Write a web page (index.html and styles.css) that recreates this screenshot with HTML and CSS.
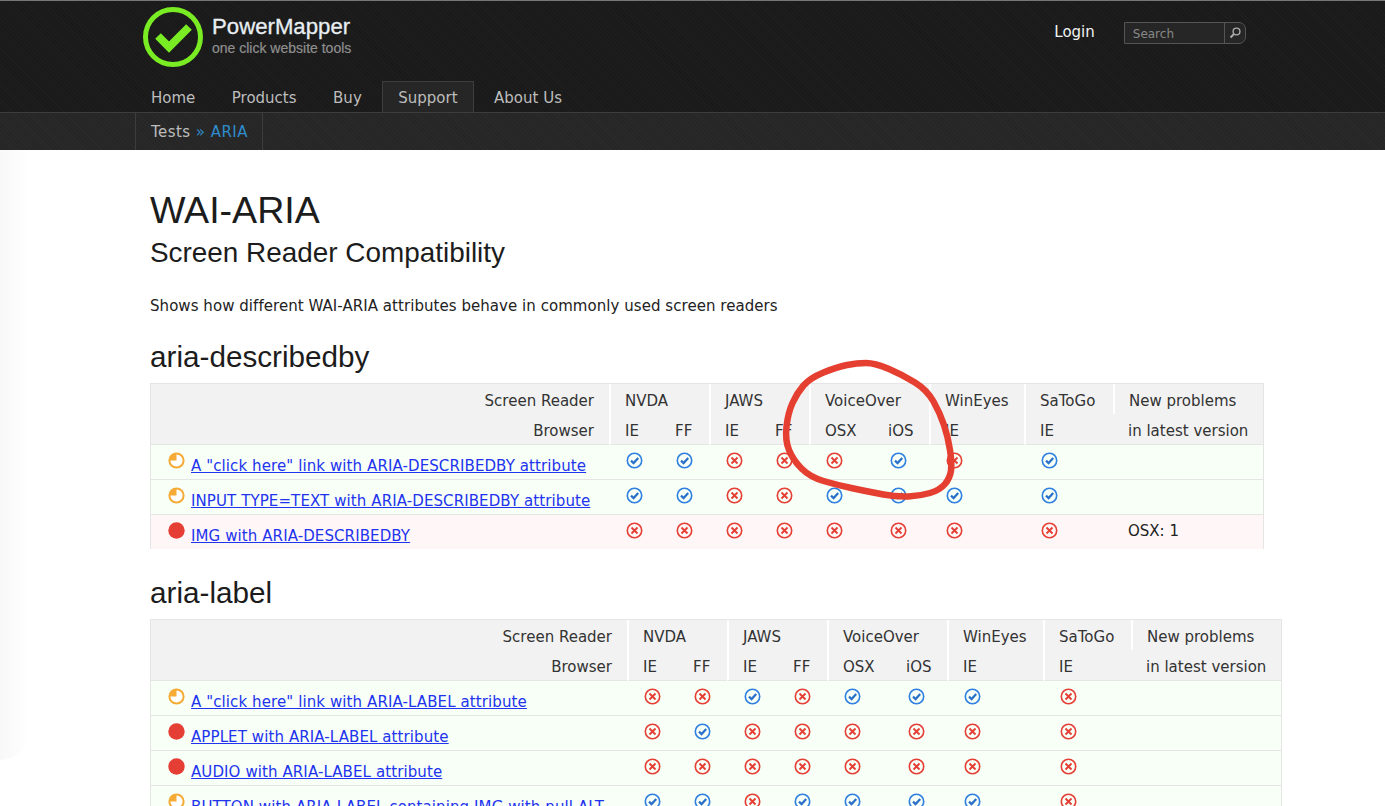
FILE: index.html
```html
<!DOCTYPE html>
<html lang="en">
  <head>
    <meta charset="UTF-8" />
    <title>WAI-ARIA Screen Reader Compatibility</title>
    <link rel="stylesheet" href="styles.css">
  </head>
  <body>
    <svg class="defs" width="0" height="0">
      <symbol id="ok" viewBox="0 0 17 17">
        <circle cx="8.5" cy="8.5" r="7.2" fill="none" stroke="#2f7fe0" stroke-width="1.6"/>
        <path d="M5 8.6l2.6 2.5 4.6-5" fill="none" stroke="#2a6fc9" stroke-width="2.2"/>
      </symbol>
      <symbol id="no" viewBox="0 0 17 17">
        <circle cx="8.5" cy="8.5" r="7.2" fill="none" stroke="#e53e35" stroke-width="1.6"/>
        <path d="M5.5 5.5l6 6M11.5 5.5l-6 6" fill="none" stroke="#e53e35" stroke-width="1.9"/>
      </symbol>
      <symbol id="part" viewBox="0 0 17 17">
        <circle cx="8.5" cy="8.5" r="7.1" fill="#fff" stroke="#f5ab35" stroke-width="2"/>
        <path d="M8.5 8.5V1.5A7 7 0 0 0 1.5 8.5z" fill="#f5ab35"/>
      </symbol>
      <symbol id="fail" viewBox="0 0 17 17">
        <circle cx="8.5" cy="8.5" r="8.2" fill="#e53e35"/>
      </symbol>
    </svg>

    <div class="page">
      <header class="site-header">
        <div class="top-bar">
          <a class="logo" href="#">
            <svg class="logo-mark" width="62" height="62" viewBox="0 0 62 62">
              <circle cx="31" cy="31" r="27.5" fill="none" stroke="#79ec23" stroke-width="5"/>
              <path d="M16 30l11 11 20-20" fill="none" stroke="#79ec23" stroke-width="8"/>
            </svg>
            <span class="logo-text">
              <span class="logo-name">PowerMapper</span>
              <span class="logo-tag">one click website tools</span>
            </span>
          </a>
          <a class="login" href="#">Login</a>
          <form class="search">
            <span class="search-input">Search</span>
            <span class="search-btn">
              <svg width="14" height="14" viewBox="0 0 14 14">
                <circle cx="8.5" cy="5.5" r="3.4" fill="none" stroke="#aaa" stroke-width="1.4"/>
                <path d="M6 8l-3.5 3.5" stroke="#aaa" stroke-width="2"/>
              </svg>
            </span>
          </form>
        </div>
        <nav class="main-nav">
          <a href="#">Home</a>
          <a href="#">Products</a>
          <a href="#">Buy</a>
          <a class="active" href="#">Support</a>
          <a href="#">About Us</a>
        </nav>
        <div class="sub-bar">
          <div class="crumbs">Tests <span class="here">» ARIA</span></div>
        </div>
      </header>

      <div class="left-fade"></div>

      <main class="content">
        <h1>WAI-ARIA</h1>
        <h2 class="subtitle">Screen Reader Compatibility</h2>
        <p class="intro">Shows how different WAI-ARIA attributes behave in commonly used screen readers</p>

        <h2 class="section">aria-describedby</h2>
        <table class="results first">
          <colgroup>
            <col class="c-label-a"><col class="c50"><col class="c50"><col class="c50"><col class="c50"><col class="c64"><col class="c56"><col class="c-win-a"><col class="c-sat-a"><col class="c-new">
          </colgroup>
          <thead>
            <tr>
              <th class="rh">Screen Reader</th>
              <th class="grp" colspan="2">NVDA</th>
              <th class="grp" colspan="2">JAWS</th>
              <th class="grp" colspan="2">VoiceOver</th>
              <th class="grp">WinEyes</th>
              <th class="grp">SaToGo</th>
              <th class="grp">New problems</th>
            </tr>
            <tr>
              <th class="rh">Browser</th>
              <th class="grp">IE</th><th>FF</th>
              <th class="grp">IE</th><th>FF</th>
              <th class="grp">OSX</th><th class="ios">iOS</th>
              <th class="grp">IE</th>
              <th class="grp">IE</th>
              <th class="latest">in latest version</th>
            </tr>
          </thead>
          <tbody>
            <tr class="good">
              <td class="name"><div class="name-in"><svg class="ic"><use href="#part"/></svg><a href="#">A "click here" link with ARIA-DESCRIBEDBY attribute</a></div></td>
              <td><svg class="ic"><use href="#ok"/></svg></td><td><svg class="ic"><use href="#ok"/></svg></td>
              <td><svg class="ic"><use href="#no"/></svg></td><td><svg class="ic"><use href="#no"/></svg></td>
              <td><svg class="ic"><use href="#no"/></svg></td><td><svg class="ic"><use href="#ok"/></svg></td>
              <td><svg class="ic"><use href="#no"/></svg></td>
              <td><svg class="ic"><use href="#ok"/></svg></td>
              <td></td>
            </tr>
            <tr class="good">
              <td class="name"><div class="name-in"><svg class="ic"><use href="#part"/></svg><a href="#">INPUT TYPE=TEXT with ARIA-DESCRIBEDBY attribute</a></div></td>
              <td><svg class="ic"><use href="#ok"/></svg></td><td><svg class="ic"><use href="#ok"/></svg></td>
              <td><svg class="ic"><use href="#no"/></svg></td><td><svg class="ic"><use href="#no"/></svg></td>
              <td><svg class="ic"><use href="#ok"/></svg></td><td><svg class="ic"><use href="#ok"/></svg></td>
              <td><svg class="ic"><use href="#ok"/></svg></td>
              <td><svg class="ic"><use href="#ok"/></svg></td>
              <td></td>
            </tr>
            <tr class="bad last">
              <td class="name"><div class="name-in"><svg class="ic"><use href="#fail"/></svg><a href="#">IMG with ARIA-DESCRIBEDBY</a></div></td>
              <td><svg class="ic"><use href="#no"/></svg></td><td><svg class="ic"><use href="#no"/></svg></td>
              <td><svg class="ic"><use href="#no"/></svg></td><td><svg class="ic"><use href="#no"/></svg></td>
              <td><svg class="ic"><use href="#no"/></svg></td><td><svg class="ic"><use href="#no"/></svg></td>
              <td><svg class="ic"><use href="#no"/></svg></td>
              <td><svg class="ic"><use href="#no"/></svg></td>
              <td class="note">OSX: 1</td>
            </tr>
          </tbody>
        </table>

        <h2 class="section">aria-label</h2>
        <table class="results second">
          <colgroup>
            <col class="c-label-b"><col class="c50"><col class="c50"><col class="c50"><col class="c50"><col class="c64"><col class="c56"><col class="c-win-b"><col class="c-sat-b"><col class="c-new">
          </colgroup>
          <thead>
            <tr>
              <th class="rh">Screen Reader</th>
              <th class="grp" colspan="2">NVDA</th>
              <th class="grp" colspan="2">JAWS</th>
              <th class="grp" colspan="2">VoiceOver</th>
              <th class="grp">WinEyes</th>
              <th class="grp">SaToGo</th>
              <th class="grp">New problems</th>
            </tr>
            <tr>
              <th class="rh">Browser</th>
              <th class="grp">IE</th><th>FF</th>
              <th class="grp">IE</th><th>FF</th>
              <th class="grp">OSX</th><th class="ios">iOS</th>
              <th class="grp">IE</th>
              <th class="grp">IE</th>
              <th class="latest">in latest version</th>
            </tr>
          </thead>
          <tbody>
            <tr class="good">
              <td class="name"><div class="name-in"><svg class="ic"><use href="#part"/></svg><a href="#">A "click here" link with ARIA-LABEL attribute</a></div></td>
              <td><svg class="ic"><use href="#no"/></svg></td><td><svg class="ic"><use href="#no"/></svg></td>
              <td><svg class="ic"><use href="#ok"/></svg></td><td><svg class="ic"><use href="#no"/></svg></td>
              <td><svg class="ic"><use href="#ok"/></svg></td><td><svg class="ic"><use href="#ok"/></svg></td>
              <td><svg class="ic"><use href="#ok"/></svg></td>
              <td><svg class="ic"><use href="#no"/></svg></td>
              <td></td>
            </tr>
            <tr class="good">
              <td class="name"><div class="name-in"><svg class="ic"><use href="#fail"/></svg><a href="#">APPLET with ARIA-LABEL attribute</a></div></td>
              <td><svg class="ic"><use href="#no"/></svg></td><td><svg class="ic"><use href="#ok"/></svg></td>
              <td><svg class="ic"><use href="#no"/></svg></td><td><svg class="ic"><use href="#no"/></svg></td>
              <td><svg class="ic"><use href="#no"/></svg></td><td><svg class="ic"><use href="#no"/></svg></td>
              <td><svg class="ic"><use href="#no"/></svg></td>
              <td><svg class="ic"><use href="#no"/></svg></td>
              <td></td>
            </tr>
            <tr class="good">
              <td class="name"><div class="name-in"><svg class="ic"><use href="#fail"/></svg><a href="#">AUDIO with ARIA-LABEL attribute</a></div></td>
              <td><svg class="ic"><use href="#no"/></svg></td><td><svg class="ic"><use href="#no"/></svg></td>
              <td><svg class="ic"><use href="#no"/></svg></td><td><svg class="ic"><use href="#no"/></svg></td>
              <td><svg class="ic"><use href="#no"/></svg></td><td><svg class="ic"><use href="#no"/></svg></td>
              <td><svg class="ic"><use href="#no"/></svg></td>
              <td><svg class="ic"><use href="#no"/></svg></td>
              <td></td>
            </tr>
            <tr class="good">
              <td class="name"><div class="name-in"><svg class="ic"><use href="#part"/></svg><a href="#">BUTTON with ARIA-LABEL containing IMG with null ALT</a></div></td>
              <td><svg class="ic"><use href="#ok"/></svg></td><td><svg class="ic"><use href="#ok"/></svg></td>
              <td><svg class="ic"><use href="#no"/></svg></td><td><svg class="ic"><use href="#ok"/></svg></td>
              <td><svg class="ic"><use href="#ok"/></svg></td><td><svg class="ic"><use href="#ok"/></svg></td>
              <td><svg class="ic"><use href="#ok"/></svg></td>
              <td><svg class="ic"><use href="#no"/></svg></td>
              <td></td>
            </tr>
          </tbody>
        </table>
      </main>

      <!-- hand drawn marker ring over the first table -->
      <svg class="scribble" width="1385" height="806" viewBox="0 0 1385 806">
        <path d="M866 363Q875 363 889 369Q903 375 915 382.5Q927 390 933.5 401.5Q940 413 944 425Q948 437 950 450Q952 463 951 470.5Q950 478 945 484Q940 490 930 493Q920 496 908.5 496.5Q897 497 883.5 494.5Q870 492 853.5 488.5Q837 485 823.5 481Q810 477 801.5 468.5Q793 460 789 450Q785 440 786.5 426.5Q788 413 792.5 403Q797 393 803.5 385.5Q810 378 823.5 372.5Q837 367 847 365Q857 363 866 363" fill="none" stroke="#e53f31" stroke-width="6.5" stroke-linecap="round"/>
      </svg>
    </div>
  </body>
</html>
```

FILE: styles.css
```css
html, body {
  margin: 0;
  height: 100%;
}
body {
  background: #fff;
  color: #222;
  font-family: "DejaVu Sans", Verdana, sans-serif;
  font-size: 15px;
}
.defs {
  display: block;
}
.page {
  position: relative;
  height: 100vh;
  overflow: hidden;
}

/* header */
.site-header {
  height: 150px;
  background-color: #1a1a1a;
  background-image: repeating-linear-gradient(45deg, rgba(255,255,255,.018) 0 1px, transparent 1px 3px);
  border-top: 1px solid #777;
  box-sizing: border-box;
}
.top-bar {
  display: flex;
  align-items: flex-start;
  height: 80px;
  padding-left: 142px;
}
.logo {
  display: flex;
  text-decoration: none;
  margin-top: 5px;
}
.logo-mark {
  flex: none;
}
.logo-text {
  display: flex;
  flex-direction: column;
  margin-left: 8px;
  padding-top: 8px;
  font-family: "Liberation Sans", Arial, sans-serif;
}
.logo-name {
  color: #e8eef2;
  font-size: 22.2px;
  line-height: 26px;
  -webkit-text-stroke: .3px #e8eef2;
}
.logo-tag {
  color: #8f8f8f;
  font-size: 14px;
  line-height: 17px;
  -webkit-text-stroke: .2px #8f8f8f;
}
.login {
  margin: 22px 0 0 703px;
  color: #f2f2f2;
  font-size: 15px;
  line-height: 18px;
  text-decoration: none;
}
.search {
  display: flex;
  height: 22px;
  margin: 21px 0 0 29px;
  box-sizing: border-box;
  border: 1px solid #555;
  border-radius: 0 7px 7px 0;
  background: #262626;
}
.search-input {
  width: 91px;
  padding-left: 8px;
  color: #888;
  font-size: 12px;
  line-height: 23px;
}
.search-btn {
  display: flex;
  align-items: center;
  justify-content: center;
  width: 20px;
  border-left: 1px solid #555;
}
.main-nav {
  display: flex;
  gap: 4.5px;
  height: 31px;
  padding-left: 135px;
}
.main-nav a {
  padding: 0 15px;
  color: #bdbdbd;
  font-size: 15px;
  line-height: 33px;
  text-decoration: none;
  border: 1px solid transparent;
  border-bottom: 0;
}
.main-nav a.active {
  background: #262626;
  border-color: #3d3d3d;
}
.sub-bar {
  height: 38px;
  box-sizing: border-box;
  padding-left: 135px;
  background-color: #262626;
  background-image: repeating-linear-gradient(45deg, rgba(255,255,255,.018) 0 1px, transparent 1px 3px);
  border-top: 1px solid #3d3d3d;
}
.crumbs {
  display: inline-block;
  height: 36px;
  padding: 1px 14px 0 15px;
  color: #bdbdbd;
  font-size: 15px;
  letter-spacing: .45px;
  line-height: 37px;
  border: solid #3d3d3d;
  border-width: 0 1px;
}
.here {
  color: #2f8ccc;
}

.left-fade {
  position: absolute;
  left: 0;
  top: 150px;
  width: 30px;
  height: 610px;
  background: linear-gradient(to right, #f8f8f8, #fcfcfc 60%, #fff);
  border-bottom-right-radius: 30px;
}

/* content */
.content {
  padding: 38px 0 0 150px;
}
h1, h2 {
  margin: 0;
  color: #1c1c1c;
  font-family: "Liberation Sans", Arial, sans-serif;
  font-weight: normal;
}
h1 {
  margin-bottom: 1px;
  font-size: 37.6px;
  line-height: 44px;
}
.subtitle {
  font-size: 27.9px;
  line-height: 40px;
}
.intro {
  margin: 23px 0 0;
  line-height: 20px;
  letter-spacing: .05px;
  color: #222;
}
.section {
  margin-top: 21px;
  font-size: 29.7px;
  line-height: 40px;
}
.results {
  margin-top: 6px;
  border-collapse: separate;
  border-spacing: 0;
  table-layout: fixed;
  border: 1px solid #e5e5e5;
  border-bottom: 0;
  line-height: 18px;
}
.results.first {
  width: 1114px;
}
.results.second {
  width: 1132px;
}
.results.first + .section {
  margin-top: 24px;
}
.c-label-a { width: 458px; }
.c-label-b { width: 476px; }
.c50 { width: 50px; }
.c64 { width: 64px; }
.c56 { width: 56px; }
.c-win-a { width: 95px; }
.c-sat-a { width: 89px; }
.c-win-b { width: 96px; }
.c-sat-b { width: 88px; }
.c-new { width: 150px; }

.results th {
  height: 30px;
  padding: 4px 0 0 16px;
  background: #f2f2f2;
  color: #333;
  font-weight: normal;
  text-align: left;
  box-sizing: border-box;
}
.results thead tr:last-child th {
  border-bottom: 1px solid #e5e5e5;
  height: 31px;
}
.results th.rh {
  padding-right: 15px;
  text-align: right;
}
.results th.grp {
  padding-left: 14px;
  border-left: 2px solid #fff;
}
.results th.ios,
.results th.latest {
  padding-left: 15px;
}
.results td {
  height: 35px;
  box-sizing: border-box;
  padding: 7px 0 0 17px;
  vertical-align: top;
  border-bottom: 1px solid #e5e5e5;
}
.results tr.good td { background: #f7fff7; }
.results tr.bad td { background: #fff7f7; }
.results tr.last td {
  height: 34px;
  border-bottom: 0;
}
.results td.note {
  padding-left: 15px;
}
.name-in {
  display: flex;
  align-items: flex-start;
  gap: 6px;
}
.name-in a {
  margin-top: 5px;
  color: #2233ee;
  letter-spacing: .1px;
  white-space: nowrap;
}
.ic {
  display: block;
  flex: none;
  width: 17px;
  height: 17px;
}

.scribble {
  position: absolute;
  left: 0;
  top: 0;
  pointer-events: none;
}
```
